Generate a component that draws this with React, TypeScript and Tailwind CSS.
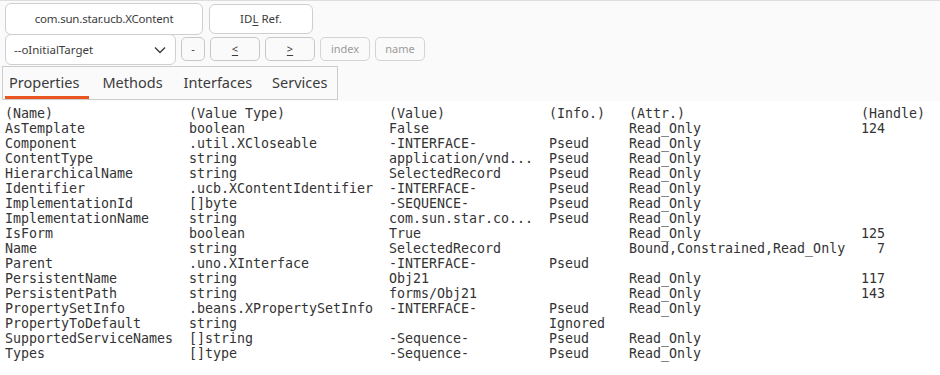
import type { ReactNode } from "react";

type Row = [string, string, string, string, string, string];

const rows: Row[] = [
  ["AsTemplate", "boolean", "False", "", "Read_Only", "124"],
  ["Component", ".util.XCloseable", "-INTERFACE-", "Pseud", "Read_Only", ""],
  ["ContentType", "string", "application/vnd...", "Pseud", "Read_Only", ""],
  ["HierarchicalName", "string", "SelectedRecord", "Pseud", "Read_Only", ""],
  ["Identifier", ".ucb.XContentIdentifier", "-INTERFACE-", "Pseud", "Read_Only", ""],
  ["ImplementationId", "[]byte", "-SEQUENCE-", "Pseud", "Read_Only", ""],
  ["ImplementationName", "string", "com.sun.star.co...", "Pseud", "Read_Only", ""],
  ["IsForm", "boolean", "True", "", "Read_Only", "125"],
  ["Name", "string", "SelectedRecord", "", "Bound,Constrained,Read_Only", "  7"],
  ["Parent", ".uno.XInterface", "-INTERFACE-", "Pseud", "", ""],
  ["PersistentName", "string", "Obj21", "", "Read_Only", "117"],
  ["PersistentPath", "string", "forms/Obj21", "", "Read_Only", "143"],
  ["PropertySetInfo", ".beans.XPropertySetInfo", "-INTERFACE-", "Pseud", "Read_Only", ""],
  ["PropertyToDefault", "string", "", "Ignored", "", ""],
  ["SupportedServiceNames", "[]string", "-Sequence-", "Pseud", "Read_Only", ""],
  ["Types", "[]type", "-Sequence-", "Pseud", "Read_Only", ""],
];

const header: Row = ["(Name)", "(Value Type)", "(Value)", "(Info.)", "(Attr.)", "(Handle)"];

function SmallButton({ children, width, dim }: { children: ReactNode; width: string; dim?: boolean }) {
  return (
    <button
      type="button"
      className={
        "flex h-[24px] items-center justify-center rounded-[5px] border bg-[#fafafa] text-[11px] " +
        width +
        (dim ? " border-[#d4d4d4] text-[#9a9a9a]" : " border-[#c8c8c8] text-[#3c3c3c]")
      }
    >
      {children}
    </button>
  );
}

function TableRow({ row }: { row: Row }) {
  return (
    <div className="flex h-[15px] whitespace-pre">
      <span className="w-[184px] shrink-0">{row[0]}</span>
      <span className="w-[200px] shrink-0">{row[1]}</span>
      <span className="w-[160px] shrink-0">{row[2]}</span>
      <span className="w-[80px] shrink-0">{row[3]}</span>
      <span className="w-[232px] shrink-0">{row[4]}</span>
      <span className="shrink-0">{row[5]}</span>
    </div>
  );
}

export default function App() {
  return (
    <div className="h-[375px] w-[940px] overflow-hidden bg-white font-['Noto_Sans',sans-serif]">
      <div className="border-t border-[#dedede] bg-[#fafafa] pb-[1px]">
        <div className="flex items-start gap-[6px] pl-[5px] pt-[2px]">
          <button
            type="button"
            className="flex h-[32px] w-[198px] items-center justify-center rounded-[6px] border border-[#cfcfcf] bg-white text-[11.5px] tracking-[-0.2px] text-[#3c3c3c]"
          >
            com.sun.star.ucb.XContent
          </button>
          <button
            type="button"
            className="mt-[1px] flex h-[30px] w-[104px] items-center justify-center rounded-[6px] border border-[#cfcfcf] bg-white text-[11.5px] text-[#3c3c3c]"
          >
            ID<span className="underline underline-offset-2">L</span>&nbsp;Ref.
          </button>
        </div>
        <div className="flex items-start gap-[5px] pl-[5px]">
          <div className="-mt-[1px] flex h-[31px] w-[171px] items-center justify-between rounded-[6px] border border-[#cfcfcf] bg-white pl-[8px] pr-[9px] text-[11.5px] text-[#3c3c3c]">
            <span>--oInitialTarget</span>
            <svg width="12" height="8" viewBox="0 0 12 8" fill="none">
              <path d="M1 1.5L6 6.5L11 1.5" stroke="#3c3c3c" strokeWidth="1.4" />
            </svg>
          </div>
          <div className="mt-[2px] flex gap-[5px]">
            <SmallButton width="w-[24px]">-</SmallButton>
            <SmallButton width="w-[50px]">
              <span className="underline underline-offset-2">&lt;</span>
            </SmallButton>
            <SmallButton width="w-[50px]">
              <span className="underline underline-offset-2">&gt;</span>
            </SmallButton>
            <SmallButton width="w-[50px]" dim>
              index
            </SmallButton>
            <SmallButton width="w-[50px]" dim>
              name
            </SmallButton>
          </div>
        </div>
        <div className="ml-[2px] mt-[1px] flex h-[34px] w-[336px] items-stretch border border-[#cccccc] text-[14.5px] text-[#3c3c3c]">
          <div className="relative flex items-center px-[6px]">
            Properties
            <span className="absolute bottom-0 left-[2px] h-[3px] w-[84px] bg-[#e9541f]" />
          </div>
          <div className="flex items-center pl-[17px]">Methods</div>
          <div className="flex items-center pl-[21px]">Interfaces</div>
          <div className="flex items-center pl-[20px]">Services</div>
        </div>
      </div>
      <div className="pl-[5px] pt-[5px] font-['DejaVu_Sans_Mono',monospace] text-[13.3px] leading-[15px] text-[#333333]">
        <TableRow row={header} />
        {rows.map((r) => (
          <TableRow key={r[0]} row={r} />
        ))}
      </div>
    </div>
  );
}
